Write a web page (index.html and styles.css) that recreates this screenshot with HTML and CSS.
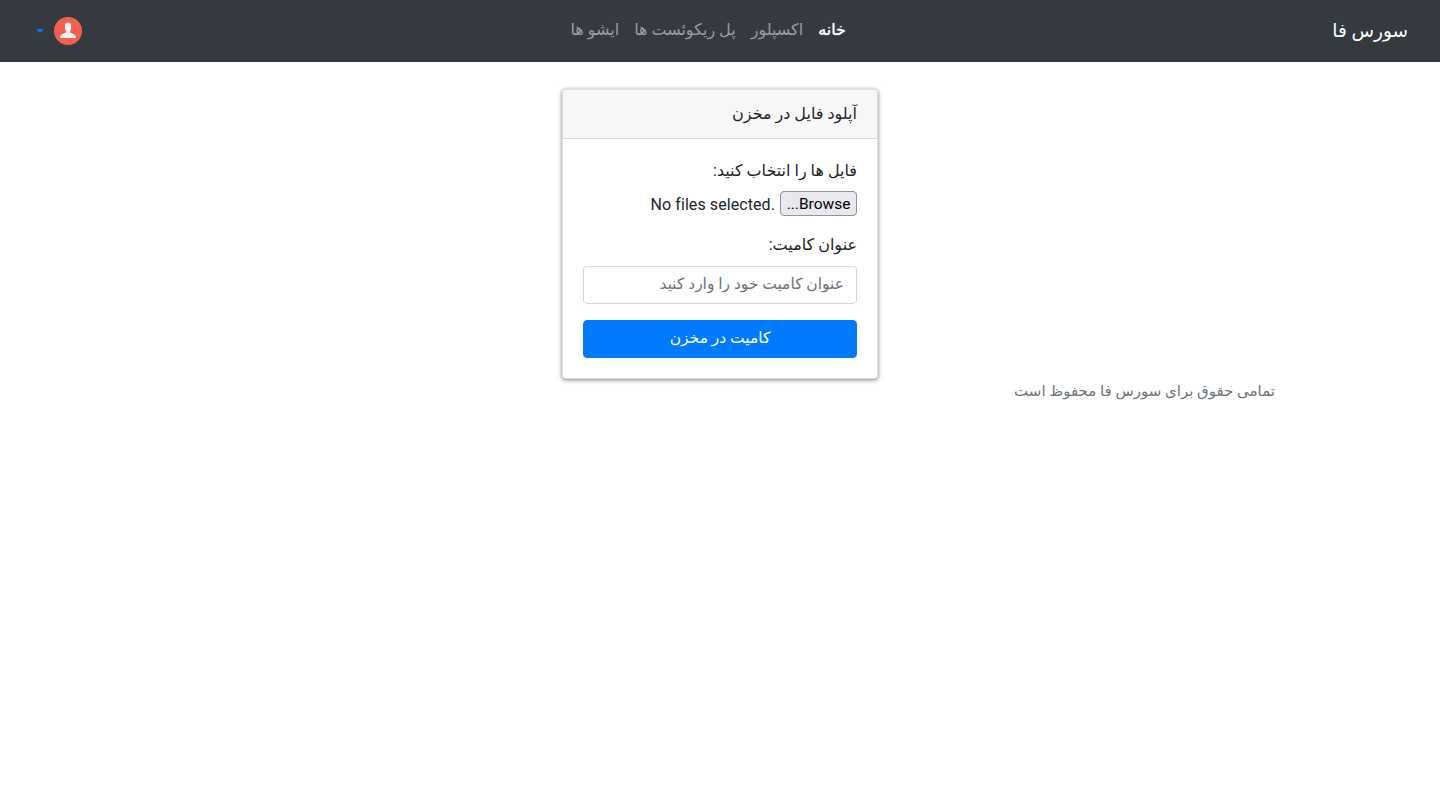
FILE: index.html
```html
<!DOCTYPE html>
<html lang="fa" dir="rtl">
<head>
  <meta charset="UTF-8">
  <title>آپلود فایل</title>
  <link rel="stylesheet" href="styles.css">
</head>
<body>
  <nav class="navbar">
    <a class="brand" href="#">سورس فا</a>
    <ul class="nav-links">
      <li><a class="active" href="#">خانه</a></li>
      <li><a href="#">اکسپلور</a></li>
      <li><a href="#">پل ریکوئست ها</a></li>
      <li><a href="#">ایشو ها</a></li>
    </ul>
    <div class="user-menu">
      <svg class="avatar" width="28" height="28" viewBox="0 0 28 28">
        <circle cx="14" cy="14" r="14" fill="#f2604f"/>
        <path d="M11 8c0-1.500 1-2.500 3-2.500s3 1 3 2.500v3c0 1.500-.5 2.500-1 3.500 0 1 1 1.500 2.500 2 2 .7 3.500 2 3.500 4.500H6c0-2.500 1.500-3.800 3.500-4.500 1.500-.5 2.500-1 2.500-2-.5-1-1-2-1-3.500z" fill="#f1ede9"/>
      </svg>
      <span class="caret"></span>
    </div>
  </nav>

  <main class="content">
    <div class="card">
      <div class="card-header">آپلود فایل در مخزن</div>
      <form class="card-body">
        <div class="form-group">
          <label for="files">فایل ها را انتخاب کنید:</label>
          <div class="file-row">
            <button class="file-btn" type="button" id="files">Browse...</button>
            <span class="file-status" dir="ltr">No files selected.</span>
          </div>
        </div>
        <div class="form-group">
          <label class="title-label" for="title">عنوان کامیت:</label>
          <input class="form-control" type="text" id="title" placeholder="عنوان کامیت خود را وارد کنید">
        </div>
        <button class="btn-primary" type="button">کامیت در مخزن</button>
      </form>
    </div>
    <p class="copyright">تمامی حقوق برای سورس فا محفوظ است</p>
  </main>
</body>
</html>
```

FILE: styles.css
```css
* {
  box-sizing: border-box;
}
body {
  margin: 0;
  background: #fff;
  color: #212529;
  font-family: Roboto, "DejaVu Sans", sans-serif;
  font-size: 16px;
  line-height: 24px;
}
.navbar {
  display: flex;
  align-items: center;
  height: 62px;
  padding: 0 32px 0 36px;
  background: #343a40;
}
.brand {
  margin-left: 16px;
  color: #fff;
  font-size: 18.5px;
  text-decoration: none;
}
.nav-links {
  display: flex;
  flex: 1;
  justify-content: center;
  gap: 15px;
  margin: 0;
  padding: 0 0 3px 18px;
  list-style: none;
}
.nav-links a {
  color: rgba(255,255,255,0.5);
  text-decoration: none;
}
.nav-links a.active {
  color: #fff;
  text-shadow: 0 0 1px #fff;
}
.user-menu {
  display: flex;
  align-items: center;
  gap: 10px;
}
.caret {
  width: 0;
  height: 0;
  border-top: 4px solid #007bff;
  border-left: 4px solid transparent;
  border-right: 4px solid transparent;
}
.avatar {
  display: block;
}
.content {
  padding: 27px 165px 0;
}
.card {
  width: 316px;
  margin: 0 auto;
  background: #fff;
  border: 1px solid rgba(0,0,0,0.125);
  border-radius: 4px;
  box-shadow: 0 1px 4px rgba(0,0,0,0.5);
}
.card-header {
  padding: 12px 20px;
  background: #f7f7f7;
  border-bottom: 1px solid rgba(0,0,0,0.125);
}
.card-body {
  padding: 20px;
}
.form-group {
  margin-bottom: 16px;
}
.form-group label {
  display: block;
  margin-bottom: 8px;
}
.form-group .title-label {
  margin-bottom: 9px;
}
.file-row {
  display: flex;
  align-items: center;
  gap: 5px;
  height: 26px;
}
.file-btn {
  align-self: flex-start;
  width: 77px;
  height: 25px;
  padding: 0;
  background: #e9e9ed;
  border: 1px solid #8f8f9d;
  border-radius: 4px;
  color: #000;
  font: 15.5px Roboto, sans-serif;
}
.file-status {
  letter-spacing: 0.08px;
  padding-top: 1px;
}
.form-control {
  display: block;
  width: 100%;
  height: 38px;
  padding: 4px 12px 6px;
  border: 1px solid #ced4da;
  border-radius: 4px;
  color: #495057;
  font: 15.5px/24px Roboto, "DejaVu Sans", sans-serif;
}
.form-control::placeholder {
  color: #6c757d;
}
.btn-primary {
  display: block;
  width: 100%;
  height: 38px;
  padding: 0 0 2px;
  background: #007bff;
  border: 1px solid #007bff;
  border-radius: 4px;
  color: #fff;
  font: 15.5px/24px Roboto, "DejaVu Sans", sans-serif;
}
.copyright {
  margin: 0;
  color: #6c757d;
  font-size: 15px;
}
```
